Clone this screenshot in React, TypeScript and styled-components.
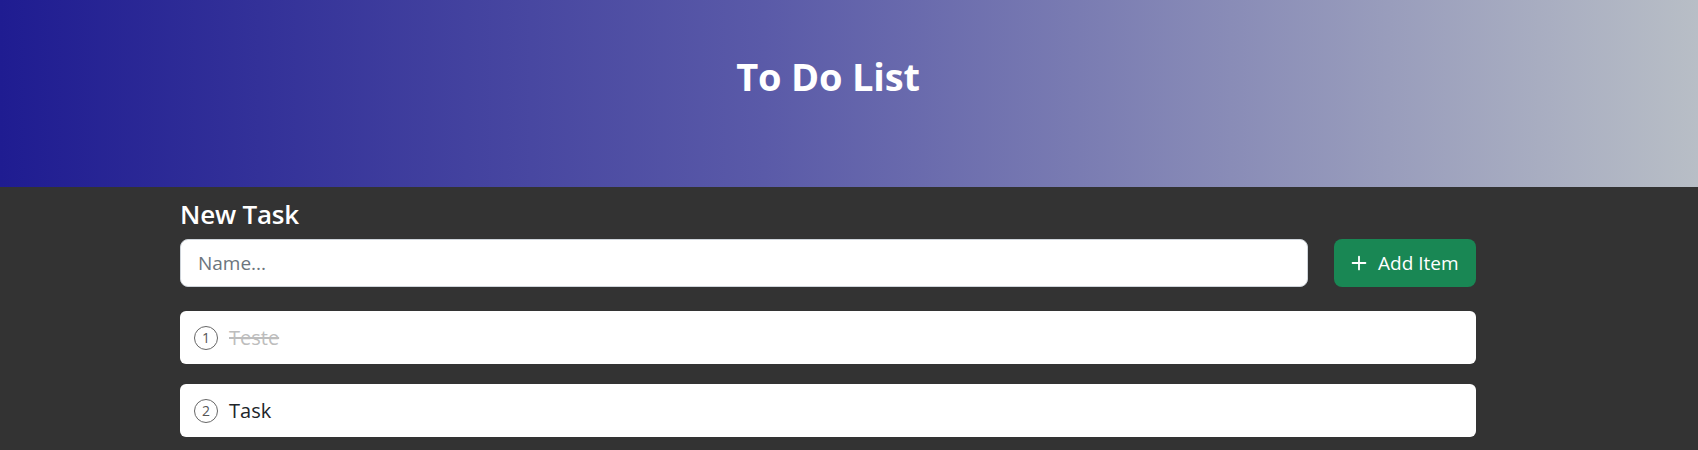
import React, { useState } from 'react';
import styled, { createGlobalStyle } from 'styled-components';
import { Plus } from 'lucide-react';

const GlobalStyle = createGlobalStyle`
    body {
        margin: 0;
        background: #333333;
        font-family: "Open Sans", "Noto Sans", sans-serif;
        color: #212529;
    }
`;

const Page = styled.div`
    min-height: 450px;
    background: #333333;
`;

const Header = styled.header`
    height: 187px;
    background: linear-gradient(to right, #1f1c91, #5a5aa8 45%, #b8bec6);
    padding-right: 42px;
    box-sizing: border-box;
`;

const Container = styled.div`
    width: 1296px;
    margin: 0 auto;
`;

const Title = styled.h1`
    margin: 0;
    padding-top: 52px;
    text-align: center;
    color: #ffffff;
    font-size: 38px;
    font-weight: 700;
    line-height: 48px;
    letter-spacing: -0.2px;
`;

const Main = styled.main`
    padding-right: 42px;
`;

const SectionTitle = styled.h3`
    margin: 11px 0 8px;
    color: #ffffff;
    font-size: 26px;
    font-weight: 600;
    line-height: 33px;
    letter-spacing: -0.2px;
`;

const InputRow = styled.form`
    display: flex;
    gap: 26px;
    margin-bottom: 24px;
`;

const NameInput = styled.input`
    flex: 1;
    height: 48px;
    box-sizing: border-box;
    padding: 0 17px;
    border: 1px solid #ced4da;
    border-radius: 8px;
    background: #ffffff;
    font-family: inherit;
    font-size: 19px;
    color: #212529;
    outline: none;

    &::placeholder {
        color: #6c757d;
    }
`;

const AddButton = styled.button`
    display: flex;
    align-items: center;
    gap: 8px;
    width: 142px;
    height: 48px;
    box-sizing: border-box;
    padding: 0 14px;
    border: none;
    border-radius: 8px;
    background: #198754;
    color: #ffffff;
    font-family: inherit;
    font-size: 19px;
    cursor: pointer;
    white-space: nowrap;
`;

const TaskList = styled.ul`
    list-style: none;
    margin: 0;
    padding: 0;
    display: flex;
    flex-direction: column;
    gap: 20px;
`;

const TaskItem = styled.li`
    display: flex;
    align-items: center;
    gap: 11px;
    height: 53px;
    box-sizing: border-box;
    padding: 0 14px;
    background: #ffffff;
    border-radius: 6px;
`;

const Index = styled.span`
    display: flex;
    align-items: center;
    justify-content: center;
    width: 24px;
    height: 24px;
    box-sizing: border-box;
    border: 1px solid #666666;
    border-radius: 50%;
    font-size: 14px;
    color: #555555;
`;

const TaskName = styled.span<{ $done: boolean }>`
    font-size: 20px;
    color: ${p => (p.$done ? '#bdbdbd' : '#212529')};
    text-decoration: ${p => (p.$done ? 'line-through' : 'none')};
`;

const App: React.FC = () => {
    const [tasks] = useState([
        { name: 'Teste', done: true },
        { name: 'Task', done: false },
    ]);

    return <Page>
        <GlobalStyle />
        <Header>
            <Container>
                <Title>To Do List</Title>
            </Container>
        </Header>
        <Main>
            <Container>
                <SectionTitle>New Task</SectionTitle>
                <InputRow onSubmit={e => e.preventDefault()}>
                    <NameInput placeholder='Name...' />
                    <AddButton type='submit'>
                        <Plus size={22} strokeWidth={2} />
                        Add Item
                    </AddButton>
                </InputRow>
                <TaskList>
                    {tasks.map((task, i) =>
                        <TaskItem key={task.name}>
                            <Index>{i + 1}</Index>
                            <TaskName $done={task.done}>{task.name}</TaskName>
                        </TaskItem>
                    )}
                </TaskList>
            </Container>
        </Main>
    </Page>
}

export default App;
